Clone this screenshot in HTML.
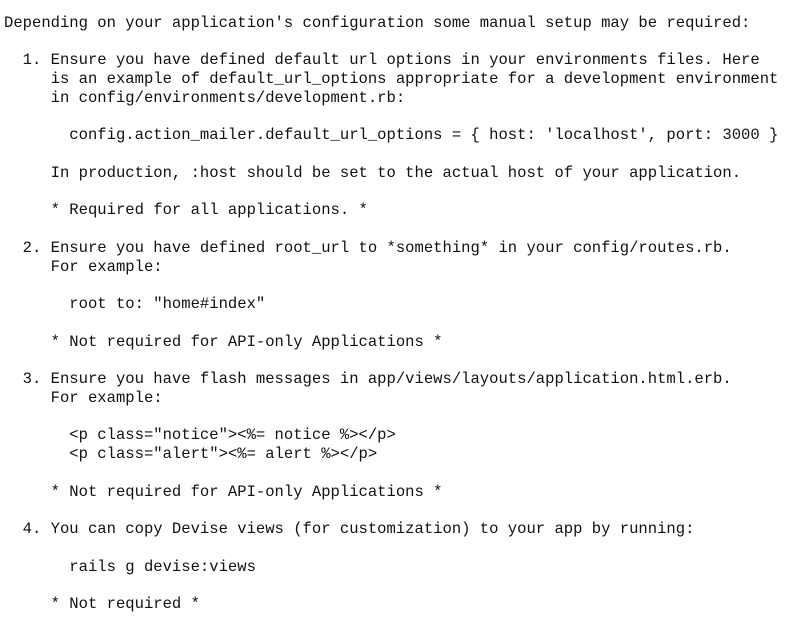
<!DOCTYPE html>
<html><head><meta charset="utf-8"><style>
html,body{margin:0;padding:0;background:#fff;width:800px;height:623px;overflow:hidden}
pre{margin:0;padding:13.6px 0 0 4px;font-family:"Liberation Mono",monospace;font-size:15.56px;line-height:18.77px;color:#111}
</style></head><body><pre>Depending on your application's configuration some manual setup may be required:

  1. Ensure you have defined default url options in your environments files. Here
     is an example of default_url_options appropriate for a development environment
     in config/environments/development.rb:

       config.action_mailer.default_url_options = { host: 'localhost', port: 3000 }

     In production, :host should be set to the actual host of your application.

     * Required for all applications. *

  2. Ensure you have defined root_url to *something* in your config/routes.rb.
     For example:

       root to: "home#index"

     * Not required for API-only Applications *

  3. Ensure you have flash messages in app/views/layouts/application.html.erb.
     For example:

       &lt;p class="notice"&gt;&lt;%= notice %&gt;&lt;/p&gt;
       &lt;p class="alert"&gt;&lt;%= alert %&gt;&lt;/p&gt;

     * Not required for API-only Applications *

  4. You can copy Devise views (for customization) to your app by running:

       rails g devise:views

     * Not required *
</pre></body></html>
